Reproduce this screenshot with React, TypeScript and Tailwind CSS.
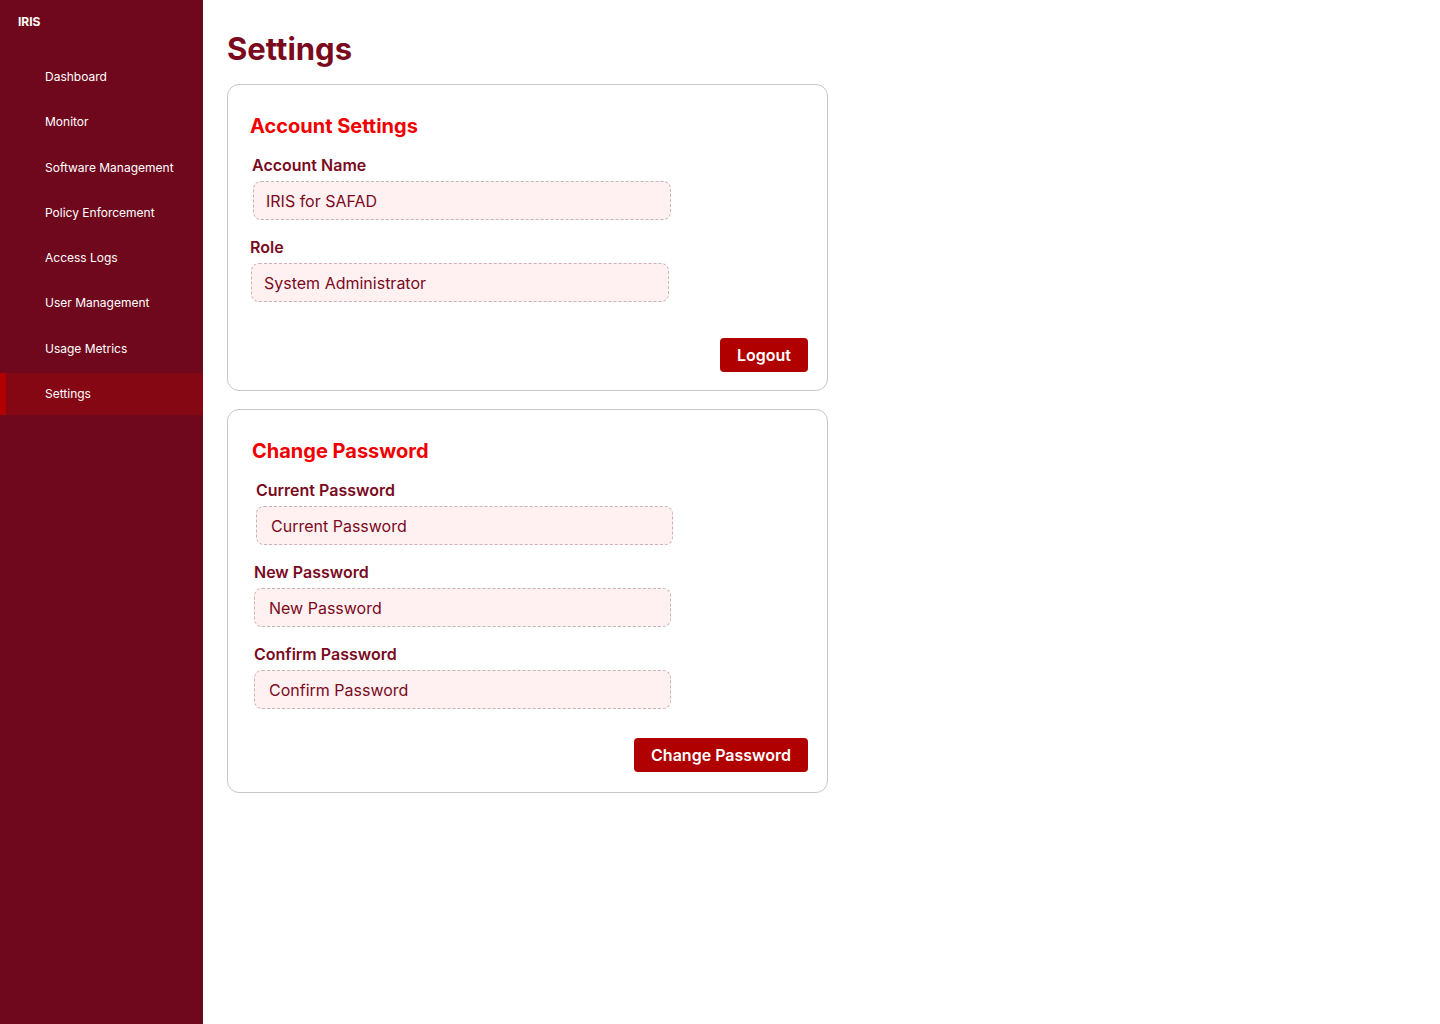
import React from 'react';

const navItems = [
  'Dashboard',
  'Monitor',
  'Software Management',
  'Policy Enforcement',
  'Access Logs',
  'User Management',
  'Usage Metrics',
  'Settings',
];

function Sidebar({ active }: { active: string }) {
  return (
    <aside className="flex min-h-screen w-[203px] shrink-0 flex-col bg-[#6f081d] text-white">
      <div className="px-[18px] pt-[14px] text-[12px] font-bold leading-4">IRIS</div>
      <nav className="mt-[26px] flex flex-col gap-[3.3px]">
        {navItems.map((label) => {
          const isActive = label === active;
          return (
            <a
              key={label}
              href="#"
              className={
                isActive
                  ? 'flex h-[42px] items-center border-l-[6px] border-[#b20000] bg-[#850714] pl-[39px] text-[12px] leading-4'
                  : 'flex h-[42px] items-center pl-[45px] text-[12px] leading-4'
              }
            >
              {label}
            </a>
          );
        })}
      </nav>
    </aside>
  );
}

function Field({
  label,
  value,
  labelOffset,
  inputOffset,
  textPad,
  width,
}: {
  label: string;
  value: string;
  labelOffset: string;
  inputOffset: string;
  textPad: string;
  width: string;
}) {
  return (
    <div className="flex flex-col">
      <label className={`${labelOffset} text-[16px] font-semibold leading-6 text-[#7a0a1e]`}>{label}</label>
      <div
        className={`${inputOffset} ${width} ${textPad} mt-1 flex h-[39px] items-center rounded-lg border border-dashed border-[#c9b3b5] bg-[#fff1f1] text-[16px] leading-6 text-[#7a0a1e]`}
      >
        {value}
      </div>
    </div>
  );
}

export default function App() {
  return (
    <div className="flex min-h-screen bg-white" style={{ fontFamily: 'Inter, "Noto Sans", sans-serif' }}>
      <Sidebar active="Settings" />
      <main className="flex-1 pl-6 pt-[29px]">
        <h1 className="text-[31px] font-bold leading-10 text-[#7a0a1e]">Settings</h1>

        <section className="mt-[15px] w-[601px] rounded-xl border border-[#c6c6c6] pb-[18px] pl-[22px] pr-[19px] pt-[27px]">
          <h2 className="text-[20px] font-bold leading-7 text-[#f00000]">Account Settings</h2>
          <div className="mt-[13px] flex flex-col gap-[15px]">
            <Field
              label="Account Name"
              value="IRIS for SAFAD"
              labelOffset="ml-[2px]"
              inputOffset="ml-[3px]"
              textPad="pl-[12px]"
              width="w-[418px]"
            />
            <Field
              label="Role"
              value="System Administrator"
              labelOffset="ml-0"
              inputOffset="ml-[1px]"
              textPad="pl-[12px]"
              width="w-[418px]"
            />
          </div>
          <div className="mt-[36px] flex justify-end">
            <button className="h-[34px] rounded bg-[#b00000] px-[17px] text-[16px] font-semibold text-white">
              Logout
            </button>
          </div>
        </section>

        <section className="mt-[18px] w-[601px] rounded-xl border border-[#c6c6c6] pb-[20px] pl-[22px] pr-[19px] pt-[27px]">
          <h2 className="ml-[2px] text-[20px] font-bold leading-7 text-[#f00000]">Change Password</h2>
          <div className="mt-[13px] flex flex-col gap-[15px]">
            <Field
              label="Current Password"
              value="Current Password"
              labelOffset="ml-[6px]"
              inputOffset="ml-[6px]"
              textPad="pl-[14px]"
              width="w-[417px]"
            />
            <Field
              label="New Password"
              value="New Password"
              labelOffset="ml-[4px]"
              inputOffset="ml-[4px]"
              textPad="pl-[14px]"
              width="w-[417px]"
            />
            <Field
              label="Confirm Password"
              value="Confirm Password"
              labelOffset="ml-[4px]"
              inputOffset="ml-[4px]"
              textPad="pl-[14px]"
              width="w-[417px]"
            />
          </div>
          <div className="mt-[29px] flex justify-end">
            <button className="h-[34px] rounded bg-[#b00000] px-[17px] text-[16px] font-semibold text-white">
              Change Password
            </button>
          </div>
        </section>
      </main>
    </div>
  );
}
